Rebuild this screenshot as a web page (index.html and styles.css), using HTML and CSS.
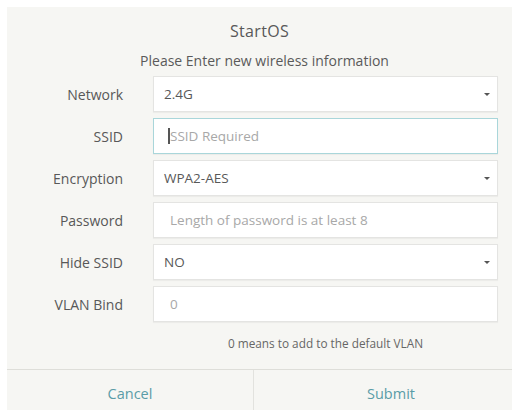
FILE: index.html
```html
<!DOCTYPE html>
<html>
<head>
<meta charset="utf-8">
<link rel="stylesheet" href="styles.css">
</head>
<body>
<div class="dialog">
  <div class="title">StartOS</div>
  <div class="subtitle">Please Enter new wireless information</div>
  <div class="form">
    <div class="row">
      <div class="label">Network</div>
      <div class="field select">2.4G<span class="arrow"></span></div>
    </div>
    <div class="row">
      <div class="label">SSID</div>
      <div class="field input focus"><span class="caret"></span><span class="ph">SSID Required</span></div>
    </div>
    <div class="row">
      <div class="label">Encryption</div>
      <div class="field select">WPA2-AES<span class="arrow"></span></div>
    </div>
    <div class="row">
      <div class="label">Password</div>
      <div class="field input"><span class="ph">Length of password is at least 8</span></div>
    </div>
    <div class="row">
      <div class="label">Hide SSID</div>
      <div class="field select">NO<span class="arrow"></span></div>
    </div>
    <div class="row">
      <div class="label">VLAN Bind</div>
      <div class="field input"><span class="ph">0</span></div>
    </div>
    <div class="hint-row">
      <div></div>
      <div class="hint">0 means to add to the default VLAN</div>
    </div>
  </div>
  <div class="footer">
    <div class="btn">Cancel</div>
    <div class="btn submit">Submit</div>
  </div>
</div>
</body>
</html>
```
FILE: styles.css
```css
html, body {
  margin: 0;
  padding: 0;
  background: #ffffff;
}
body {
  font-family: "Open Sans", "Noto Sans", sans-serif;
  color: #555555;
}
.dialog {
  margin: 7px 0 0 7px;
  width: 505px;
  background: #f6f6f3;
}
.title {
  padding-top: 14px;
  font-size: 16px;
  letter-spacing: 0.3px;
  line-height: 20px;
  text-align: center;
  color: #585858;
}
.subtitle {
  margin-top: 12px;
  padding-left: 10px;
  font-size: 14px;
  line-height: 16px;
  text-align: center;
  color: #5a5a5a;
}
.form {
  margin-top: 7px;
  padding-right: 14px;
  display: flex;
  flex-direction: column;
  gap: 6px;
}
.row, .hint-row {
  display: grid;
  grid-template-columns: 116px 1fr;
  column-gap: 30px;
  align-items: center;
}
.label {
  text-align: right;
  font-size: 14px;
  color: #585858;
}
.field {
  position: relative;
  height: 36px;
  box-sizing: border-box;
  background: #ffffff;
  border: 1px solid #e4e4e2;
  box-shadow: 0 1px 1px rgba(0,0,0,0.04);
  display: flex;
  align-items: center;
  font-size: 13.5px;
  color: #585858;
}
.select {
  padding-left: 10px;
}
.input {
  padding-left: 16px;
}
.focus {
  border-color: #a9d6da;
}
.ph {
  color: #a8a8a8;
}
.caret {
  width: 2px;
  height: 16px;
  background: #555;
  margin-left: -2px;
}
.arrow {
  position: absolute;
  right: 7px;
  top: 16px;
  width: 0;
  height: 0;
  border-left: 3px solid transparent;
  border-right: 3px solid transparent;
  border-top: 3px solid #555;
}
.hint-row {
  margin-top: 8px;
}
.hint {
  text-align: center;
  font-size: 11.8px;
  line-height: 14px;
  color: #666;
}
.footer {
  margin-top: 19px;
  border-top: 1px solid #deded9;
  display: grid;
  grid-template-columns: 246px 1fr;
  height: 40px;
}
.btn {
  display: flex;
  align-items: center;
  justify-content: center;
  padding-top: 7px;
  font-size: 14.5px;
  color: #5a9ca7;
}
.btn + .btn {
  border-left: 1px solid #e2e2de;
}
.submit {
  padding-left: 16px;
}
```
